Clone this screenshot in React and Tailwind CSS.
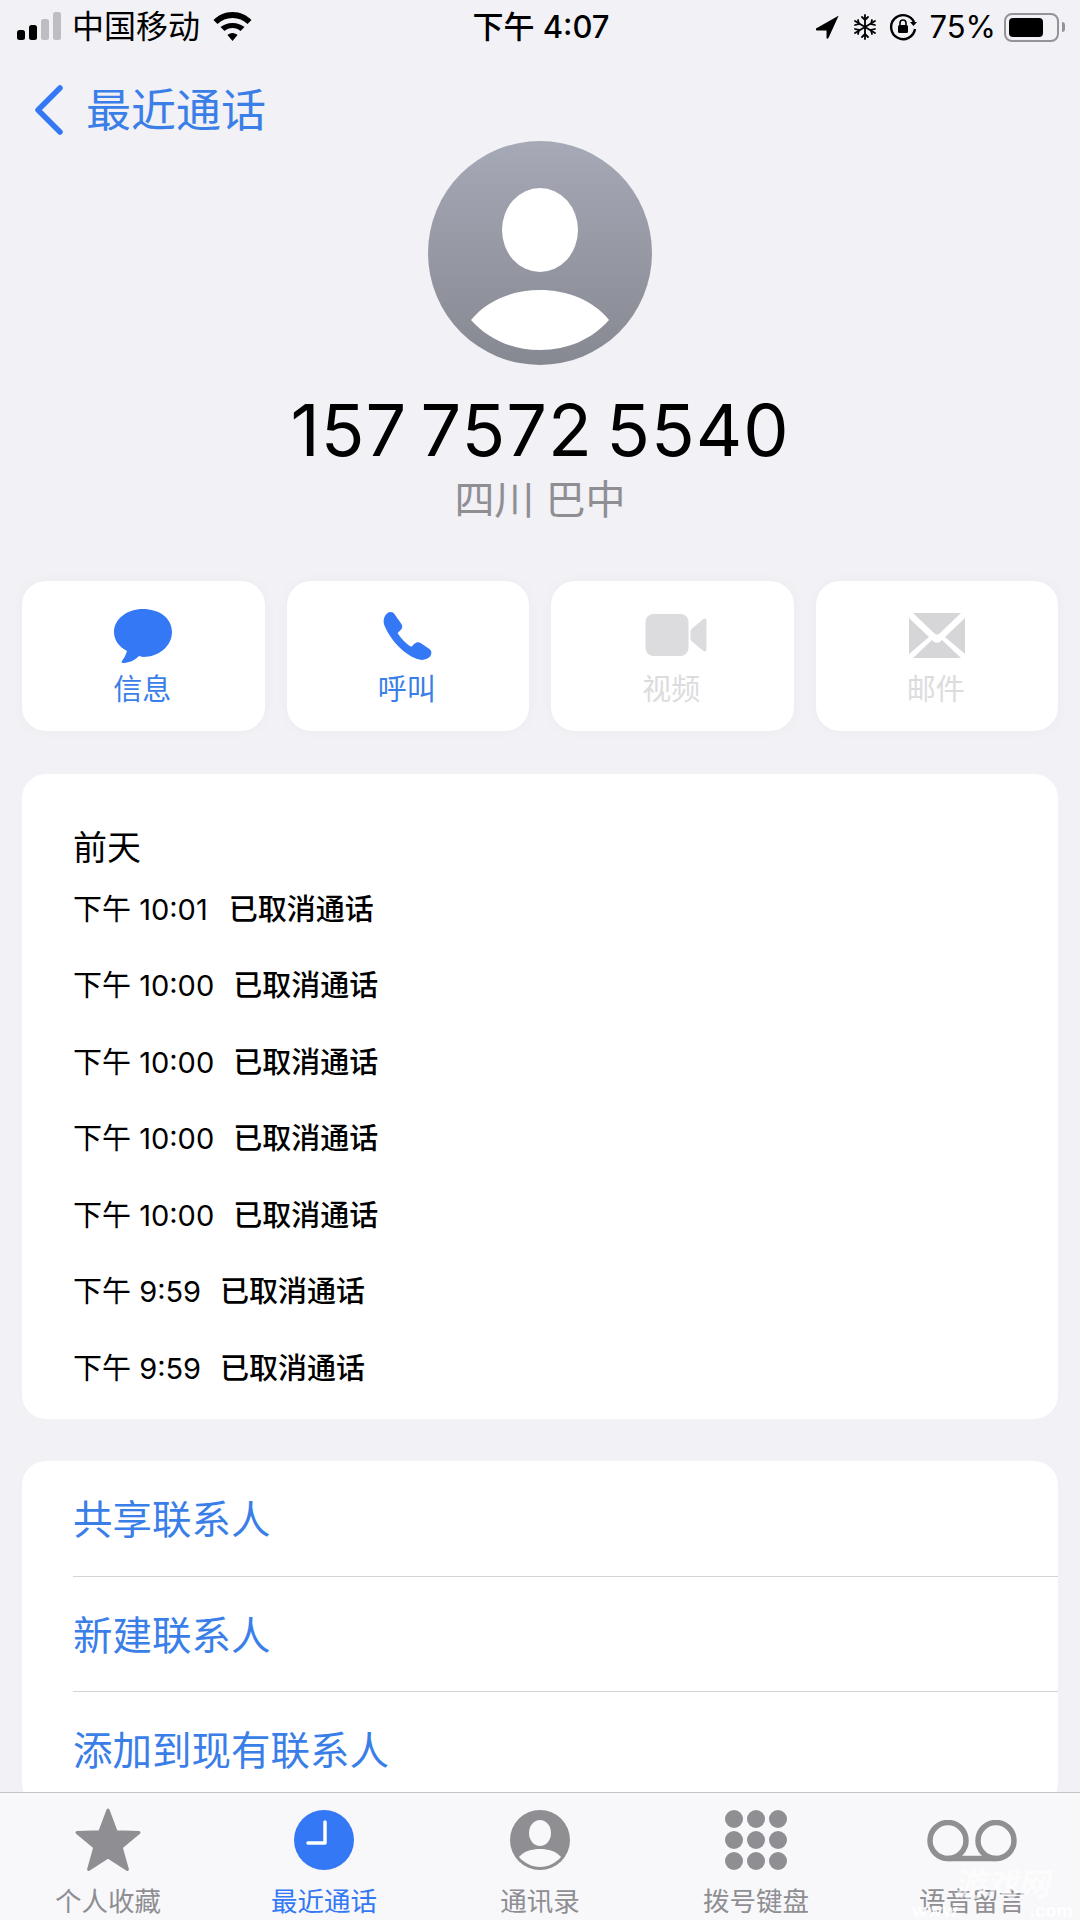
const calls = [
  ["下午 10:01", "mr-[21px]"],
  ["下午 10:00", "mr-[19px]"],
  ["下午 10:00", "mr-[19px]"],
  ["下午 10:00", "mr-[19px]"],
  ["下午 10:00", "mr-[19px]"],
  ["下午 9:59", "mr-[19px]"],
  ["下午 9:59", "mr-[19px]"],
];

const MessageIcon = () => (
  <svg width="58" height="54" viewBox="0 0 58 54" fill="#3478f6">
    <path d="M29 0C13 0 0 10 0 23c0 8 5 15 13 19-1 4-3 7-5 10-1 1 0 2 1 2 5 0 11-2 16-7l4 1c16 0 29-11 29-25S45 0 29 0z" />
  </svg>
);

const PhoneIcon = () => (
  <svg width="49" height="50" viewBox="0 0 50 50" fill="#3478f6">
    <path d="M4 2c3-2 6-2 8 1l7 10c1 2 1 4-1 6l-3 3c2 4 9 12 14 14l3-3c2-2 4-2 6-1l9 6c3 2 3 5 1 8-3 3-7 4-11 3C22 45 7 29 1 13 0 9 1 5 4 2z" />
  </svg>
);

const VideoIcon = () => (
  <svg className="ml-[8px]" width="63" height="44" viewBox="0 0 62 44" fill="#dcdcde">
    <rect x="0" y="0" width="43" height="42" rx="8" />
    <path d="M47 14l11-9c2-1 3 0 3 2v28c0 2-1 3-3 2l-11-9c-1-1-2-2-2-3V17c0-1 1-2 2-3z" />
  </svg>
);

const MailIcon = () => (
  <svg width="56" height="46" viewBox="0 0 56 46" fill="#d6d6d8">
    <path d="M4 0h48L31 20c-2 2-4 2-6 0L4 0z" />
    <path d="M0 5l20 19L0 41V5z" />
    <path d="M56 5L36 24l20 17V5z" />
    <path d="M4 45l19-18 2 2c2 1 4 1 6 0l2-2 19 18H4z" />
  </svg>
);

const SnowIcon = () => (
  <svg width="24" height="26" viewBox="0 0 24 26" fill="none" stroke="#000" strokeWidth="1.800" strokeLinecap="round">
    <path d="M12 1v24M2 7l20 12M22 7L2 19" />
    <path d="M9 3l3 3 3-3M9 23l3-3 3 3" />
    <path d="M2 11l4-1-1-4M22 15l-4 1 1 4M22 11l-4-1 1-4M2 15l4 1-1 4" />
  </svg>
);

const ActionButton = ({ icon, label, color }) => (
  <div className="flex h-[150px] flex-1 flex-col items-center rounded-[24px] bg-white shadow-[0_0_14px_rgba(0,0,0,0.03)]">
    <div className="mt-[27px] flex h-[56px] items-center justify-center">{icon}</div>
    <span className={`mr-[2px] mt-[8px] text-[29px] leading-[36px] ${color}`}>{label}</span>
  </div>
);

const TabItem = ({ icon, label, active }) => (
  <div className="flex flex-1 flex-col items-center">
    <div className="flex h-[64px] items-center justify-center">{icon}</div>
    <span className={`mt-[11px] text-[26.500px] leading-[36px] ${active ? "text-[#3478f6]" : "text-[#8e8e93]"}`}>
      {label}
    </span>
  </div>
);

export default function App() {
  return (
    <div className="flex h-[1920px] w-[1080px] flex-col overflow-hidden bg-[#f1f1f6] font-[Inter,'Noto_Sans_CJK_SC',sans-serif] text-black">
      <div className="flex-1 overflow-hidden">
        {/* Barra de estado */}
        <div className="flex h-[54px] items-center pl-[17px] pr-[15px] text-[31px]">
          <div className="flex flex-1 items-center">
            <svg width="45" height="30" viewBox="0 0 45 30">
              <rect x="0" y="18" width="8" height="10" rx="2.5" fill="#000" />
              <rect x="12" y="13" width="8" height="15" rx="2.5" fill="#000" />
              <rect x="24" y="7" width="8" height="21" rx="2.5" fill="#bdbdc2" />
              <rect x="36" y="0" width="8" height="28" rx="2.5" fill="#bdbdc2" />
            </svg>
            <span className="ml-[10px] text-[32px]">中国移动</span>
            <svg className="ml-[12px]" width="41" height="30" viewBox="0 0 40 30">
              <path d="M20 0C12 0 6 3 1 8l4 4c4-4 9-6 15-6s11 2 15 6l4-4C34 3 28 0 20 0z" />
              <path d="M20 11c-5 0-9 2-12 4l4 4c2-2 5-3 8-3s6 1 8 3l4-4c-3-2-7-4-12-4z" />
              <path d="M20 21c-2 0-4 1-5 2l5 6 5-6c-1-1-3-2-5-2z" />
            </svg>
          </div>
          <span className="font-medium">下午 4:07</span>
          <div className="flex flex-1 items-center justify-end">
            <svg width="23" height="23" viewBox="0 0 24 24">
              <path d="M23 0L0 13c-1 1-1 2 1 2h10v8c0 1 1 1 2 0L23 1c1-1 0-1 0-1z" />
            </svg>
            <span className="ml-[14px]">
              <SnowIcon />
            </span>
            <svg className="ml-[12px]" width="28" height="28" viewBox="0 0 28 28">
              <path d="M25 9A12 12 0 1 0 26 16" fill="none" stroke="#000" strokeWidth="2.4" />
              <path d="M21 9h7l-3.500 4z" />
              <rect x="9" y="12" width="10" height="8" rx="1.500" />
              <path d="M11 12V10a3 3 0 0 1 6 0v2" fill="none" stroke="#000" strokeWidth="1.600" />
            </svg>
            <span className="ml-[12px]">75%</span>
            <div className="ml-[8px] flex h-[29px] w-[55px] items-center rounded-[8px] border-[2px] border-[#949498] p-[3px]">
              <div className="h-full w-[34px] rounded-[4px] bg-black" />
            </div>
            <div className="ml-[3px] h-[10px] w-[3px] rounded-r-full bg-[#949498]" />
          </div>
        </div>

        {/* Volver */}
        <div className="mt-[28px] flex h-[56px] items-center pl-[34px] text-[#3a7ee8]">
          <svg width="30" height="50" viewBox="0 0 30 50" fill="none" stroke="#3478f6" strokeWidth="5.500" strokeLinecap="round" strokeLinejoin="round">
            <path d="M26 3L4 25l22 22" />
          </svg>
          <span className="ml-[22px] text-[45px] leading-none">最近通话</span>
        </div>

        {/* Avatar */}
        <div className="mt-[3px] flex justify-center">
          <svg width="224" height="224" viewBox="0 0 224 224">
            <defs>
              <linearGradient id="avatarBg" x1="0" y1="0" x2="0" y2="1">
                <stop offset="0" stopColor="#a6a9b6" />
                <stop offset="1" stopColor="#868991" />
              </linearGradient>
            </defs>
            <circle cx="112" cy="112" r="112" fill="url(#avatarBg)" />
            <ellipse cx="112" cy="89" rx="38" ry="42" fill="#fff" />
            <path d="M43 179c16-20 42-30 69-30s53 10 69 30c-17 19-41 30-69 30s-52-11-69-30z" fill="#fff" />
          </svg>
        </div>

        <div className="mt-[29px] text-center text-[72px] leading-[72px] tracking-[1px] [word-spacing:-8px]">157 7572 5540</div>
        <div className="mt-[10px] text-center text-[40px] leading-[48px] text-[#8e8e93]">四川 巴中</div>

        {/* Acciones */}
        <div className="mt-[57px] flex gap-[22px] px-[22px]">
          <ActionButton icon={<MessageIcon />} label="信息" color="text-[#3a7ee8]" />
          <ActionButton icon={<PhoneIcon />} label="呼叫" color="text-[#3a7ee8]" />
          <ActionButton icon={<VideoIcon />} label="视频" color="text-[#dcdcde]" />
          <ActionButton icon={<MailIcon />} label="邮件" color="text-[#dcdcde]" />
        </div>

        {/* Historial */}
        <div className="mx-[22px] mt-[43px] h-[645px] rounded-[24px] bg-white pl-[51px] pt-[54px]">
          <div className="text-[34px] leading-[40px]">前天</div>
          <div className="mt-[3px]">
            {calls.map(([time, gap], i) => (
              <div key={i} className="flex h-[76.500px] items-center text-[29px]">
                <span className={gap}>{time}</span>
                <span className="font-medium">已取消通话</span>
              </div>
            ))}
          </div>
        </div>

        {/* Opciones */}
        <div className="mx-[22px] mt-[42px] rounded-[24px] bg-white pl-[51px] text-[39.500px] text-[#3a7ee8]">
          <div className="flex h-[116px] items-center border-b border-[#d4d4d6] pt-[5px]">共享联系人</div>
          <div className="flex h-[115px] items-center border-b border-[#d4d4d6] pt-[5px]">新建联系人</div>
          <div className="flex h-[115px] items-center pt-[5px]">添加到现有联系人</div>
        </div>
      </div>

      {/* Barra de pestañas */}
      <div className="relative h-[128px] shrink-0 border-t border-[#c4c4c6] bg-[#f8f8fa] pt-[15px]">
        <div className="flex">
          <TabItem
            label="个人收藏"
            icon={
              <svg width="68" height="66" viewBox="0 0 64 64" fill="#8e8e93" stroke="#8e8e93" strokeWidth="3" strokeLinejoin="round">
                <polygon points="32,3 39.900,24.100 62,24.800 44.800,39.200 50.800,60.500 32,48.500 13.200,60.500 19.200,39.200 2,24.800 24.100,24.100" />
              </svg>
            }
          />
          <TabItem
            active
            label="最近通话"
            icon={
              <svg width="60" height="60" viewBox="0 0 60 60">
                <circle cx="30" cy="30" r="30" fill="#3478f6" />
                <path d="M31 12v21H14" fill="none" stroke="#fff" strokeWidth="3.500" strokeLinecap="round" strokeLinejoin="round" />
              </svg>
            }
          />
          <TabItem
            label="通讯录"
            icon={
              <svg width="60" height="60" viewBox="0 0 60 60">
                <circle cx="30" cy="30" r="30" fill="#8e8e93" />
                <ellipse cx="30" cy="23" rx="11" ry="13" fill="#f8f8fa" />
                <path d="M9 47c5-6 13-8 21-8s16 2 21 8c-5 6-13 10-21 10S14 53 9 47z" fill="#f8f8fa" />
              </svg>
            }
          />
          <TabItem
            label="拨号键盘"
            icon={
              <svg width="62" height="60" viewBox="0 0 62 60" fill="#8e8e93">
                {[9, 30, 51].map((cy) =>
                  [9, 31, 53].map((cx) => <circle key={`${cx}-${cy}`} cx={cx} cy={cy} r="9" />)
                )}
              </svg>
            }
          />
          <TabItem
            label="语音留言"
            icon={
              <svg className="mt-[2px]" width="90" height="42" viewBox="0 0 90 42" fill="none" stroke="#8e8e93" strokeWidth="5.500">
                <circle cx="21" cy="20.500" r="18" />
                <circle cx="69" cy="20.500" r="18" />
                <path d="M21 38.500h48" />
              </svg>
            }
          />
        </div>
        {/* Marca de agua */}
        <div className="absolute right-[7px] top-[76px] flex w-[161px] flex-col items-center text-white">
          <span className="ml-[18px] text-[32px] font-bold italic leading-[32px] opacity-60">游戏网</span>
          <div className="mt-[1px] flex w-full justify-between text-[18px] font-bold leading-[18px] opacity-90">
            <span>www</span>
            <span>.com</span>
          </div>
        </div>
      </div>
    </div>
  );
}
